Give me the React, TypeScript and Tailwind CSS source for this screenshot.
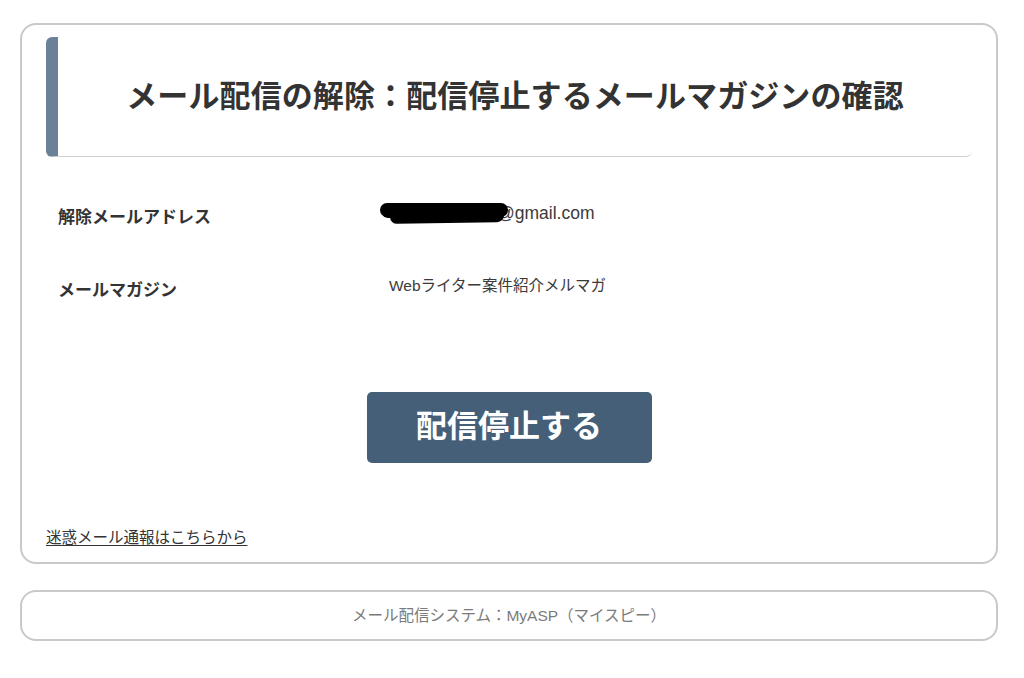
import React from 'react';

const rows = [
  { label: '解除メールアドレス', value: 'email' },
  { label: 'メールマガジン', value: 'Webライター案件紹介メルマガ' },
];

const App: React.FC = () => {
  return (
    <div className="min-h-screen bg-white pt-[23px] pl-[20px] font-['Liberation_Sans','Noto_Sans_CJK_JP',sans-serif] text-[#333]">
      <div className="w-[978px] h-[541px] border-2 border-[#c9c9c9] rounded-[16px] px-6 pt-3 flex flex-col">
        {/* heading */}
        <div className="h-[120px] flex items-center justify-center border-l-[12px] border-l-[#6b8197] border-b border-b-[#d0d0d0] rounded-[6px]">
          <h1 className="text-[31px] font-bold leading-none tracking-[0.1px] text-[#333]">
            メール配信の解除：配信停止するメールマガジンの確認
          </h1>
        </div>

        <div className="mt-[44px]">
          {rows.map((row) => (
            <div key={row.label} className="flex h-[73px] pl-3">
              <div className="w-[322px] pt-[5px] text-[17px] font-bold leading-6">{row.label}</div>
              {row.value === 'email' ? (
                <div className="relative text-[17.5px] leading-6 text-[#3a3a3a]">
                  <span className="inline-block w-[117px]" />
                  @gmail.com
                  {/* redaction scribble */}
                  <span className="absolute left-0 top-[2px] w-[128px] h-[14px] rounded-full bg-black" />
                  <span className="absolute left-[10px] top-[8px] w-[114px] h-[14px] rounded-full bg-black -rotate-1" />
                  <span className="absolute left-[2px] top-[5px] w-[40px] h-[12px] rounded-full bg-black" />
                </div>
              ) : (
                <div className="pl-[9px] text-[15.5px] leading-6 text-[#3a3a3a]">{row.value}</div>
              )}
            </div>
          ))}
        </div>

        <button className="mt-[45px] mx-auto w-[285px] h-[71px] rounded-[5px] bg-[#465f79] text-white text-[31px] font-bold">
          配信停止する
        </button>

        <a href="#" className="mt-[65px] text-[15.5px] leading-5 text-[#333] underline underline-offset-2 self-start">
          迷惑メール通報はこちらから
        </a>
      </div>

      <div className="mt-[26px] w-[978px] h-[51px] border-2 border-[#c9c9c9] rounded-[16px] flex items-center justify-center">
        <p className="text-[15.5px] text-[#7b7b7b]">メール配信システム：MyASP（マイスピー）</p>
      </div>
    </div>
  );
};

export default App;
